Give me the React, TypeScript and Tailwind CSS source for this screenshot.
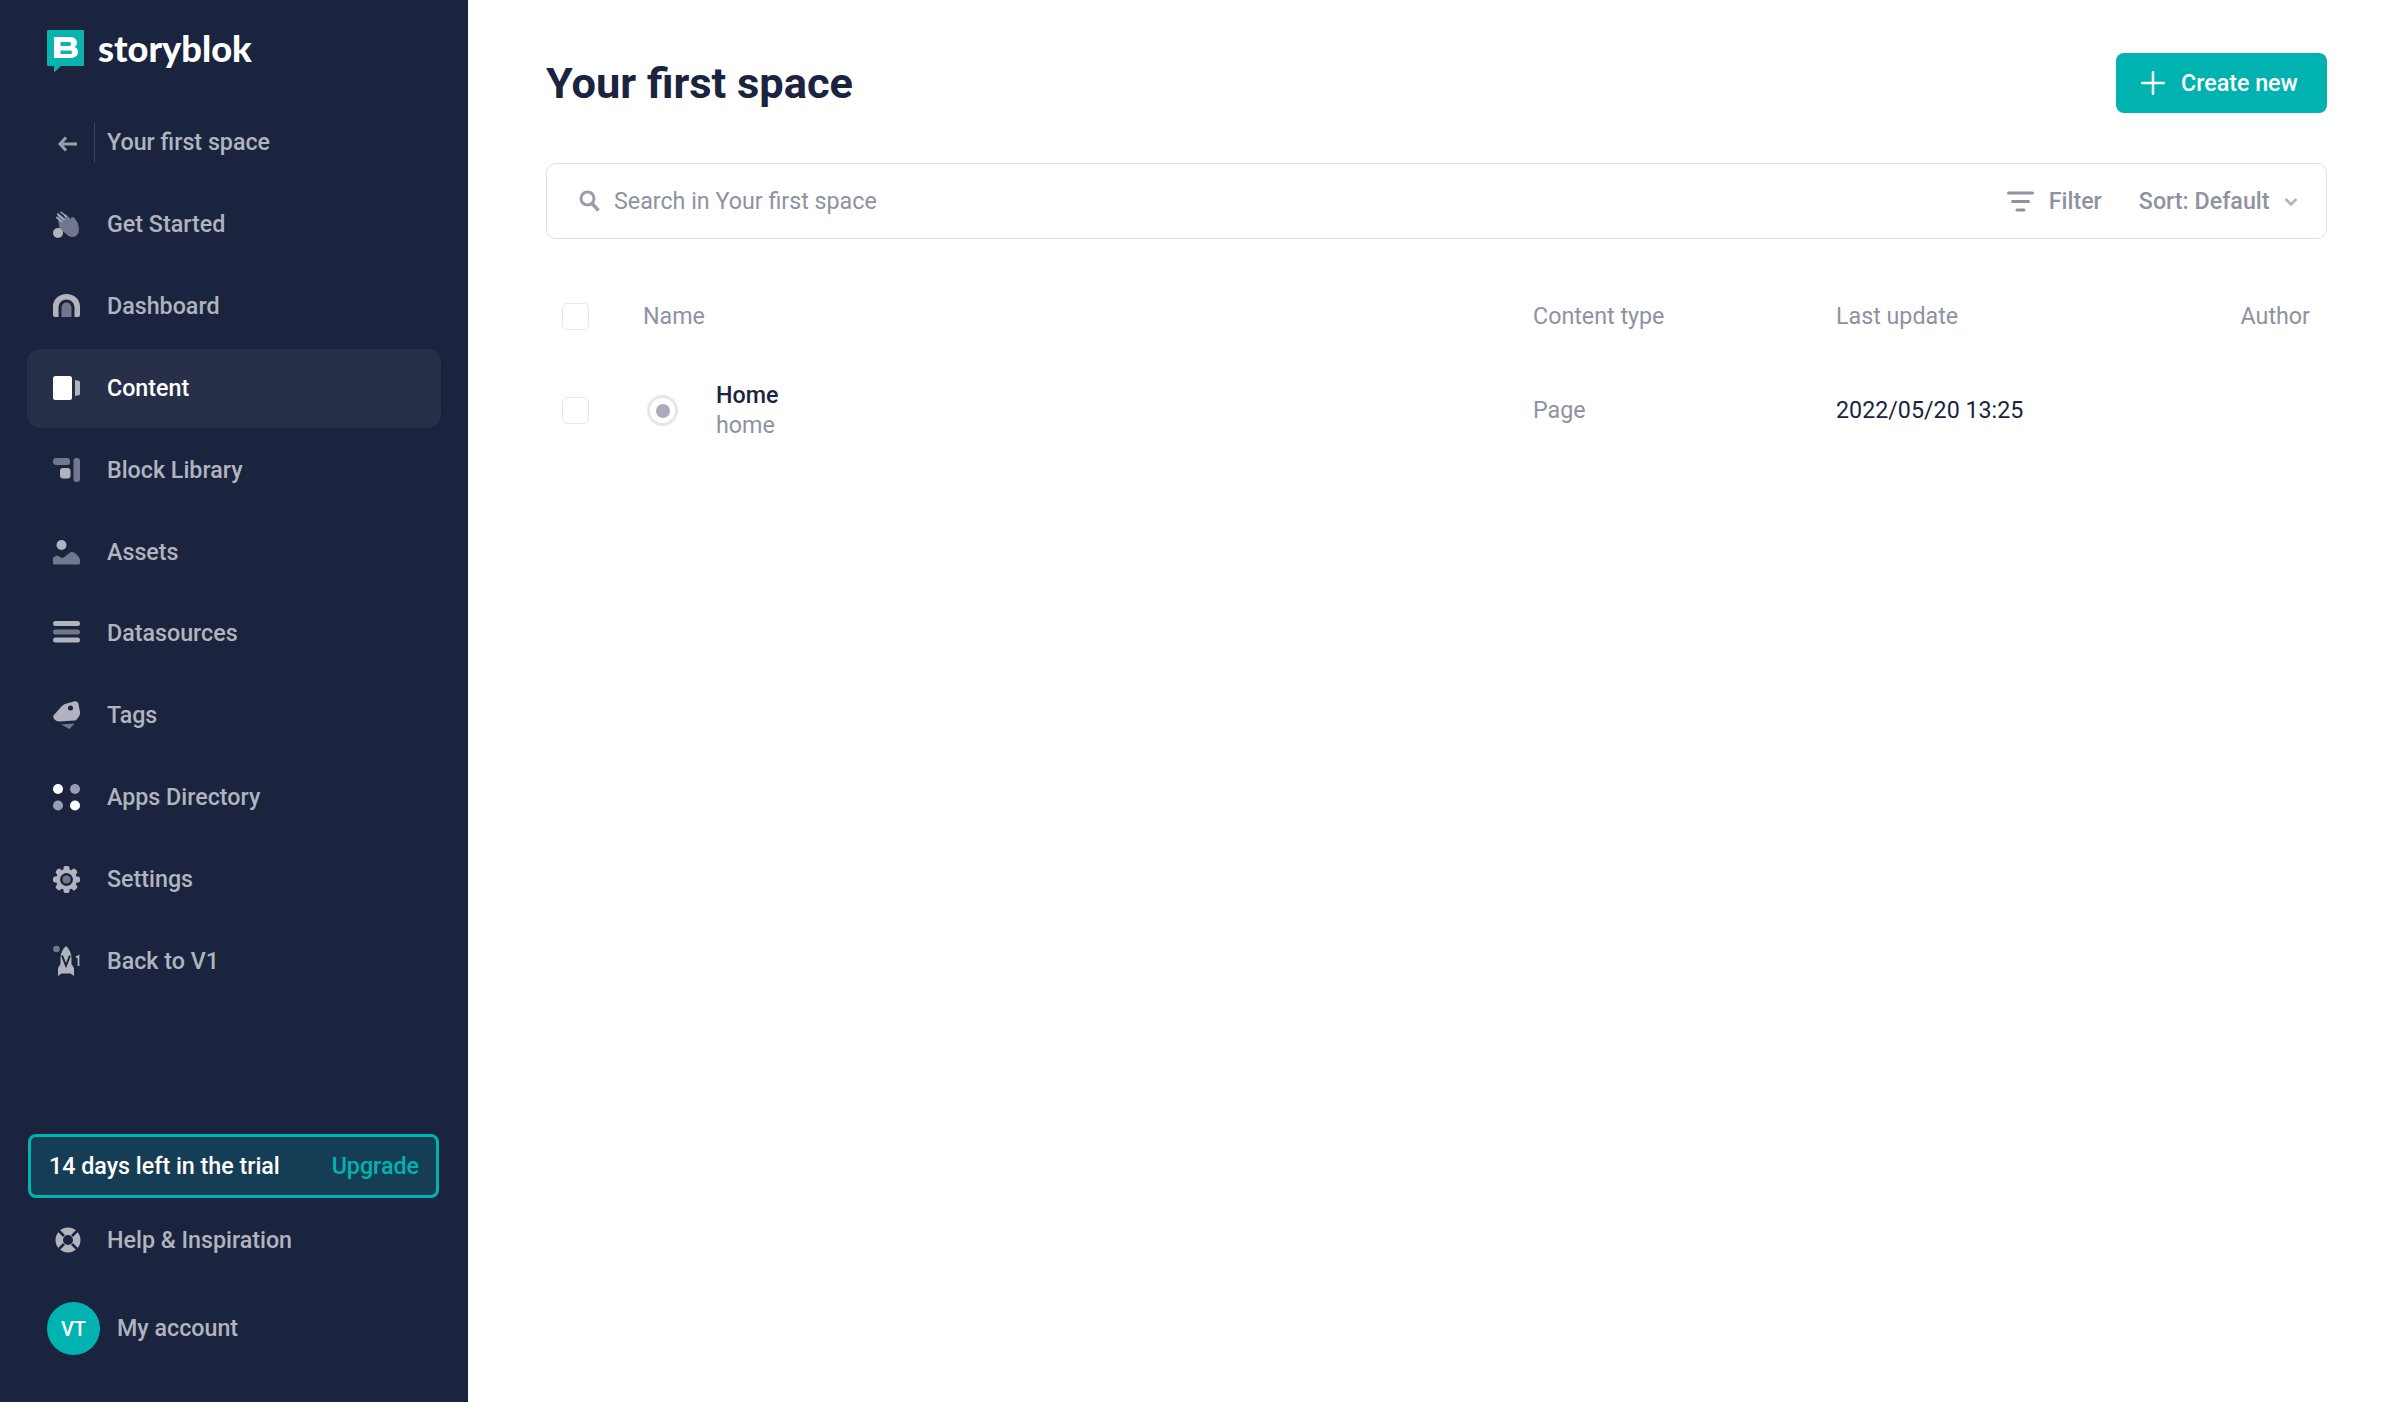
const light = "#b1b4bf";
const dark = "#71778c";

function IconHand() {
  return (
    <svg width="27" height="27" viewBox="0 0 27 27">
      <path d="M4 1l8 6.500-1-3.500 1.500-1 5.500 5 .5-2 2.500.5 3.500 5 1.500 5.500-.5 5-3 3.500-4 .5-3-1-9-7.500z" fill={dark} />
      <path d="M3 6l6 5M4.500 3l7 6M7.500.8l6 5" stroke={light} strokeWidth="1.300" fill="none" />
      <circle cx="5" cy="22" r="5" fill={light} />
    </svg>
  );
}

function IconDashboard() {
  return (
    <svg width="27" height="27" viewBox="0 0 27 27">
      <path d="M0 13.500C0 6 6 1 13.500 1S27 6 27 13.500V22a2 2 0 0 1-2 2h-3.500v-9c0-5-3.500-8.500-8-8.500s-8 3.500-8 8.500v9H2a2 2 0 0 1-2-2z" fill={light} />
      <path d="M8.500 24v-9c0-3 2-5.500 5-5.500s5 2.500 5 5.500v9z" fill={dark} />
    </svg>
  );
}

function IconContent() {
  return (
    <svg width="27" height="27" viewBox="0 0 27 27">
      <rect x="0" y="1" width="19" height="24" rx="2.500" fill="#fff" />
      <path d="M22 5l3.500.8a1.500 1.500 0 0 1 1.500 1.500v11.400a1.500 1.500 0 0 1-1.500 1.500L22 21z" fill={light} />
    </svg>
  );
}

function IconBlocks() {
  return (
    <svg width="27" height="27" viewBox="0 0 27 27">
      <rect x="0" y="1" width="17" height="7" rx="3" fill={dark} />
      <rect x="7" y="11" width="10.500" height="10.500" rx="3" fill={light} />
      <rect x="20.500" y="1" width="6.500" height="24" rx="3" fill={dark} />
    </svg>
  );
}

function IconAssets() {
  return (
    <svg width="27" height="27" viewBox="0 0 27 27">
      <circle cx="8.500" cy="6" r="5" fill={light} />
      <path d="M0 19.500c0-.8.500-1.300 1-1.500l3-1.500c1-.3 4 2.500 5.500 2.500 2 0 6.500-6 9.500-6s8 5 8 8v3a1.500 1.500 0 0 1-1.500 1.500h-24A1.500 1.500 0 0 1 0 24z" fill={dark} />
    </svg>
  );
}

function IconDatasources() {
  return (
    <svg width="27" height="27" viewBox="0 0 27 27">
      <rect x="0" y="1" width="27" height="5" rx="2.500" fill={light} />
      <rect x="0" y="9.500" width="27" height="5" rx="2.500" fill={dark} />
      <rect x="0" y="17.500" width="27" height="5" rx="2.500" fill={light} />
    </svg>
  );
}

function IconTag() {
  return (
    <svg width="27" height="29" viewBox="0 0 27 29">
      <path d="M.5 14.500L8 6c1-1 2-2 4-3l9-2.500c2-.5 4 .5 4.500 2.500l1.500 8c.2 1.500-.2 3-1 4.500L24 18c-.5 1-1.500 1.500-2.500 1.500L6 20.500c-3 0-6.500-3-5.500-6z" fill={light} />
      <circle cx="17.500" cy="7" r="2.500" fill="#1a243e" />
      <path d="M8 23.500l13.500-1-5 5.500z" fill={dark} />
    </svg>
  );
}

function IconApps() {
  return (
    <svg width="27" height="27" viewBox="0 0 27 27">
      <circle cx="5" cy="5" r="5" fill="#fff" />
      <circle cx="22" cy="5" r="5" fill="#9a9dac" />
      <circle cx="5" cy="21.500" r="5" fill="#9a9dac" />
      <circle cx="22" cy="21.500" r="5" fill="#fff" />
    </svg>
  );
}

function IconGear() {
  return (
    <svg width="27" height="27" viewBox="0 0 27 27">
      <g fill={light}>
        <circle cx="13.500" cy="13.500" r="10.500" />
        {[0, 45, 90, 135, 180, 225, 270, 315].map((a) => (
          <rect key={a} x="10.500" y="0" width="6" height="6" rx="2" transform={`rotate(${a} 13.500 13.500)`} />
        ))}
      </g>
      <circle cx="13.500" cy="13.500" r="6.500" fill="#1a243e" />
      <circle cx="13.500" cy="13.500" r="4" fill={dark} />
    </svg>
  );
}

function IconRocket() {
  return (
    <svg width="27" height="32" viewBox="0 0 27 32">
      <circle cx="3.500" cy="4" r="3.300" fill={dark} />
      <path d="M13 1c3.500 3 5.500 7.500 5.500 12v6l2.500 4v8l-3.500-2.500h-9L5 31v-8l2.500-4v-6c0-4.500 2-9 5.500-12z" fill={light} />
      <path d="M9 10.500l4 10 4-10" fill="none" stroke="#1a243e" strokeWidth="2" />
      <path d="M23 12.500l2.500-1.500v10" fill="none" stroke={light} strokeWidth="1.800" />
    </svg>
  );
}

function IconHelp() {
  return (
    <svg width="26" height="26" viewBox="0 0 26 26">
      <circle cx="13" cy="13" r="12.500" fill={light} />
      <circle cx="13" cy="13" r="5" fill="#1a243e" />
      <g stroke="#1a243e" strokeWidth="2.500">
        <path d="M4 4l5 5M22 4l-5 5M4 22l5-5M22 22l-5-5" />
      </g>
    </svg>
  );
}

function IconLogo() {
  return (
    <svg width="37" height="43" viewBox="0 0 37 43" className="shrink-0">
      <path d="M1 0h35a1 1 0 0 1 1 1v34a1 1 0 0 1-1 1H14l-7 6.500V36H1a1 1 0 0 1-1-1V1a1 1 0 0 1 1-1z" fill="#09b3af" />
      <path d="M7 7h16c4.500 0 7 2.500 7 5.500 0 2-1 3.500-2.500 4.500 2 .8 3.500 2.500 3.500 5 0 3.500-3 6-7.500 6H7zM13.500 12v4H22c1.500 0 2-.8 2-2s-.5-2-2-2zM13.500 20.500V24H23c1.500 0 2-.8 2-1.800s-.5-1.700-2-1.700z" fill="#fff" fillRule="evenodd" />
    </svg>
  );
}

const navItems = [
  { label: "Get Started", icon: <IconHand /> },
  { label: "Dashboard", icon: <IconDashboard /> },
  { label: "Content", icon: <IconContent />, active: true },
  { label: "Block Library", icon: <IconBlocks /> },
  { label: "Assets", icon: <IconAssets /> },
  { label: "Datasources", icon: <IconDatasources /> },
  { label: "Tags", icon: <IconTag /> },
  { label: "Apps Directory", icon: <IconApps /> },
  { label: "Settings", icon: <IconGear /> },
  { label: "Back to V1", icon: <IconRocket /> },
];

function Checkbox() {
  return <div className="h-[27px] w-[27px] shrink-0 rounded-[5px] border border-[#e6e7ea] bg-white" />;
}

export default function App() {
  return (
    <div className="flex h-screen w-full overflow-hidden bg-white font-['Roboto',sans-serif] text-[23.25px]">
      <aside className="flex h-full w-[468px] shrink-0 flex-col bg-[#1a243e] px-[27px]">
        <div className="flex items-start gap-[14px] pl-[20px] pt-[30px]">
          <IconLogo />
          <span className="-mt-[4px] font-['Lato',sans-serif] text-[36.2px] leading-[44px] font-black text-white">storyblok</span>
        </div>

        <nav className="mt-[28px] flex flex-col">
          <div className="flex h-[83px] items-center pl-[31px]">
            <svg width="20" height="16" viewBox="0 0 20 16" className="mt-[2px] shrink-0">
              <path d="M8 1.500L2 8l6 6.500M2 8h17" fill="none" stroke="#9a9eac" strokeWidth="3" />
            </svg>
            <div className="ml-[16px] h-[40px] w-px bg-[#3e465d]" />
            <span className="ml-[12px] font-medium text-[#b1b4bf]">Your first space</span>
          </div>
          {navItems.map((item) => (
            <div key={item.label} className="flex h-[81.8px] items-center py-px">
              <div
                className={
                  item.active
                    ? "flex h-full w-[414px] items-center rounded-[14px] bg-[#282f49] pl-[26px] font-medium text-white"
                    : "flex h-full w-[414px] items-center rounded-[14px] pl-[26px] font-medium text-[#b1b4bf]"
                }
              >
                <span className="flex w-[27px] shrink-0 items-center justify-center">{item.icon}</span>
                <span className="ml-[27px]">{item.label}</span>
              </div>
            </div>
          ))}
        </nav>

        <div className="mt-auto pb-[47px]">
          <div className="ml-px flex h-[64px] w-[411px] items-center justify-between rounded-[8px] border-[3px] border-[#00b3b0] bg-[#153d55] pl-[18px] pr-[17px] font-medium">
            <span className="text-white">14 days left in the trial</span>
            <span className="text-[#00b3b0]">Upgrade</span>
          </div>
          <div className="mt-[8px] flex h-[68px] items-center pl-[28px] font-medium text-[#b1b4bf]">
            <IconHelp />
            <span className="ml-[26px]">Help &amp; Inspiration</span>
          </div>
          <div className="mt-[28px] flex items-center pl-[20px]">
            <div className="flex h-[53px] w-[53px] items-center justify-center rounded-full bg-[#00b3b0] text-[20px] font-medium text-white">VT</div>
            <span className="ml-[17px] font-medium text-[#b1b4bf]">My account</span>
          </div>
        </div>
      </aside>

      <main className="min-w-0 flex-1 pl-[78px] pr-[78px] pt-[53px]">
        <div className="flex h-[60px] items-center justify-between">
          <h1 className="mt-[2px] text-[43.400px] font-bold text-[#1b243f]">Your first space</h1>
          <button className="flex h-[60px] w-[211px] items-center rounded-[8px] bg-[#00b3b0] pl-[25px] font-medium text-white">
            <svg width="24" height="24" viewBox="0 0 24 24" className="shrink-0">
              <path d="M12 1v22M1 12h22" stroke="#fff" strokeWidth="2.500" strokeLinecap="round" />
            </svg>
            <span className="ml-[16px]">Create new</span>
          </button>
        </div>

        <div className="mt-[50px] flex h-[76px] items-center rounded-[10px] border border-[#dfe0e5] pl-[32px] pr-[28px] text-[#8e92a2]">
          <svg width="21" height="22" viewBox="0 0 21 22" className="shrink-0">
            <circle cx="8.500" cy="8.500" r="6.500" fill="none" stroke="#9a9eac" strokeWidth="3" />
            <path d="M13 13.500l6.500 7" stroke="#9a9eac" strokeWidth="3.500" />
          </svg>
          <span className="ml-[14px] flex-1">Search in Your first space</span>
          <svg width="27" height="21" viewBox="0 0 27 21" className="shrink-0">
            <path d="M1.500 2h24M5.500 10.500h16M10 19h7" stroke="#8e92a2" strokeWidth="3" strokeLinecap="round" />
          </svg>
          <span className="ml-[15px] font-medium">Filter</span>
          <span className="ml-[37px] font-medium">Sort: Default</span>
          <svg width="14" height="10" viewBox="0 0 14 10" className="ml-[14.5px] mt-[2px] shrink-0">
            <path d="M1.500 2L7 7.500 12.500 2" fill="none" stroke="#b1b4bf" strokeWidth="2.500" />
          </svg>
        </div>

        <div className="mt-[64px] flex h-[27px] items-center pl-[16px] pr-[17px] text-[#8e92a2]">
          <Checkbox />
          <span className="ml-[54px] w-[890px]">Name</span>
          <span className="w-[303px]">Content type</span>
          <span className="flex-1">Last update</span>
          <span>Author</span>
        </div>

        <div className="mt-[67px] flex h-[27px] items-center pl-[16px] pr-[17px]">
          <Checkbox />
          <div className="ml-[58px] flex h-[31px] w-[31px] shrink-0 items-center justify-center rounded-full border-[3px] border-[#e6e7ea]">
            <div className="h-[14px] w-[14px] rounded-full bg-[#a9acb8]" />
          </div>
          <div className="ml-[38px] -mt-[2px] w-[817px]">
            <div className="leading-[30px] font-medium text-[#1b243f]">Home</div>
            <div className="leading-[30px] text-[#8e92a2]">home</div>
          </div>
          <span className="w-[303px] text-[#8e92a2]">Page</span>
          <span className="text-[#1b243f]">2022/05/20 13:25</span>
        </div>
      </main>
    </div>
  );
}
